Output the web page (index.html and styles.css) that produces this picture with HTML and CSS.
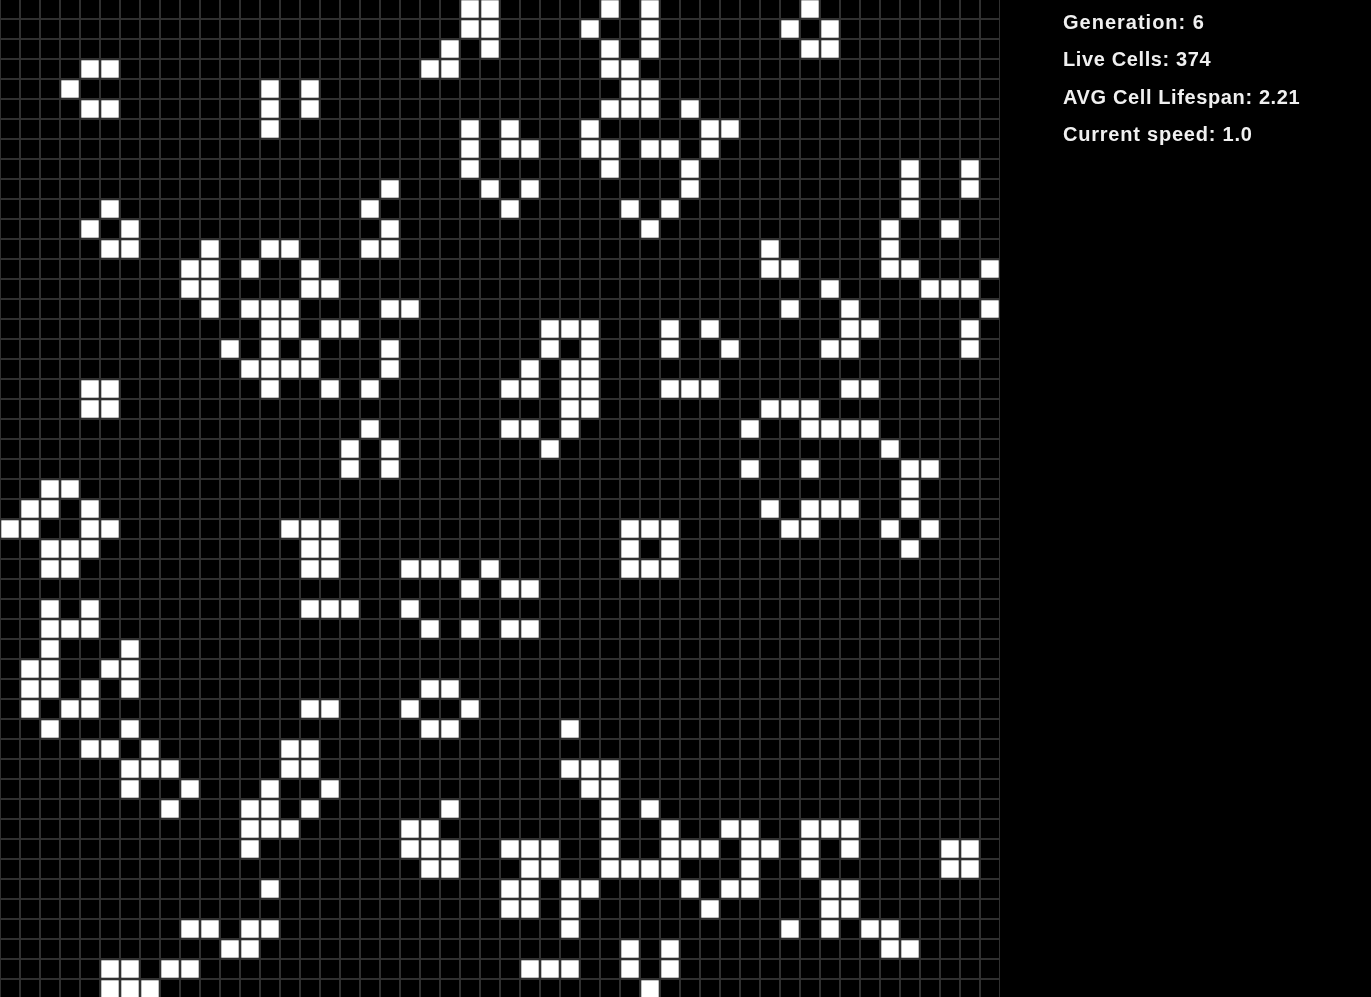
FILE: index.html
```html
<!DOCTYPE html>
<html>
  <head>
    <meta charset="UTF-8">
    <title>Game of Life</title>
    <link rel="stylesheet" href="styles.css">
  </head>
  <body>
    <div class="app">
      <canvas class="board" id="board" width="1000" height="1000"></canvas>
      <div class="stats">
        <p class="stat">Generation: 6</p>
        <p class="stat stat-tight">Live Cells: 374</p>
        <p class="stat stat-tight">AVG Cell Lifespan: 2.21</p>
        <p class="stat stat-mid">Current speed: 1.0</p>
      </div>
    </div>
    <script src="life.js"></script>
  </body>
</html>
```

FILE: styles.css
```css
*, html, body {
  margin: 0;
  padding: 0;
}

body {
  height: 100vh;
  overflow: hidden;
  background: #000;
}

.app {
  display: flex;
  align-items: flex-start;
}

.board {
  display: block;
  flex: none;
  width: 1000px;
  height: 1000px;
}

.stats {
  padding: 3.5px 0 0 63px;
  color: #f0f0f0;
  font-family: "Liberation Sans", Arial, sans-serif;
  font-size: 20px;
  font-weight: bold;
  white-space: nowrap;
  filter: blur(0.35px);
}

.stat {
  line-height: 37.5px;
  letter-spacing: 1px;
}

.stat-tight { letter-spacing: 0.62px }
.stat-mid { letter-spacing: 0.78px }
```

FILE: life.js
```js
(function(window, undefined) {

  const CELL = 20
  const SIZE = 50

  // live columns per row, generation 6
  const live = [
    [23, 24, 30, 32, 40],
    [23, 24, 29, 32, 39, 41],
    [22, 24, 30, 32, 40, 41],
    [4, 5, 21, 22, 30, 31],
    [3, 13, 15, 31, 32],
    [4, 5, 13, 15, 30, 31, 32, 34],
    [13, 23, 25, 29, 35, 36],
    [23, 25, 26, 29, 30, 32, 33, 35],
    [23, 30, 34, 45, 48],
    [19, 24, 26, 34, 45, 48],
    [5, 18, 25, 31, 33, 45],
    [4, 6, 19, 32, 44, 47],
    [5, 6, 10, 13, 14, 18, 19, 38, 44],
    [9, 10, 12, 15, 38, 39, 44, 45, 49],
    [9, 10, 15, 16, 41, 46, 47, 48],
    [10, 12, 13, 14, 19, 20, 39, 42, 49],
    [13, 14, 16, 17, 27, 28, 29, 33, 35, 42, 43, 48],
    [11, 13, 15, 19, 27, 29, 33, 36, 41, 42, 48],
    [12, 13, 14, 15, 19, 26, 28, 29],
    [4, 5, 13, 16, 18, 25, 26, 28, 29, 33, 34, 35, 42, 43],
    [4, 5, 28, 29, 38, 39, 40],
    [18, 25, 26, 28, 37, 40, 41, 42, 43],
    [17, 19, 27, 44],
    [17, 19, 37, 40, 45, 46],
    [2, 3, 45],
    [1, 2, 4, 38, 40, 41, 42, 45],
    [0, 1, 4, 5, 14, 15, 16, 31, 32, 33, 39, 40, 44, 46],
    [2, 3, 4, 15, 16, 31, 33, 45],
    [2, 3, 15, 16, 20, 21, 22, 24, 31, 32, 33],
    [23, 25, 26],
    [2, 4, 15, 16, 17, 20],
    [2, 3, 4, 21, 23, 25, 26],
    [2, 6],
    [1, 2, 5, 6],
    [1, 2, 4, 6, 21, 22],
    [1, 3, 4, 15, 16, 20, 23],
    [2, 6, 21, 22, 28],
    [4, 5, 7, 14, 15],
    [6, 7, 8, 14, 15, 28, 29, 30],
    [6, 9, 13, 16, 29, 30],
    [8, 12, 13, 15, 22, 30, 32],
    [12, 13, 14, 20, 21, 30, 33, 36, 37, 40, 41, 42],
    [12, 20, 21, 22, 25, 26, 27, 30, 33, 34, 35, 37, 38, 40, 42, 47, 48],
    [21, 22, 26, 27, 30, 31, 32, 33, 37, 40, 47, 48],
    [13, 25, 26, 28, 29, 34, 36, 37, 41, 42],
    [25, 26, 28, 35, 41, 42],
    [9, 10, 12, 13, 28, 39, 41, 43, 44],
    [11, 12, 31, 33, 44, 45],
    [5, 6, 8, 9, 26, 27, 28, 31, 33],
    [5, 6, 7, 32]
  ]

  const ctx = document.getElementById('board').getContext('2d')

  function drawGrid() {
    ctx.fillStyle = '#303030'
    for (let i = 0; i <= SIZE; i++) {
      ctx.fillRect(i * CELL - 1, 0, 2, CELL * SIZE)
      ctx.fillRect(0, i * CELL - 1, CELL * SIZE, 2)
    }
  }

  function drawCells() {
    ctx.fillStyle = '#fff'
    live.forEach((cols, row) => {
      cols.forEach((col) => {
        ctx.fillRect(col * CELL + 1.25, row * CELL + 1.25, CELL - 2.5, CELL - 2.5)
      })
    })
  }

  ctx.fillStyle = '#000'
  ctx.fillRect(0, 0, CELL * SIZE, CELL * SIZE)
  // the rows sit one pixel higher than the columns
  ctx.translate(0, -1)
  drawGrid()
  drawCells()

})(window)
```
